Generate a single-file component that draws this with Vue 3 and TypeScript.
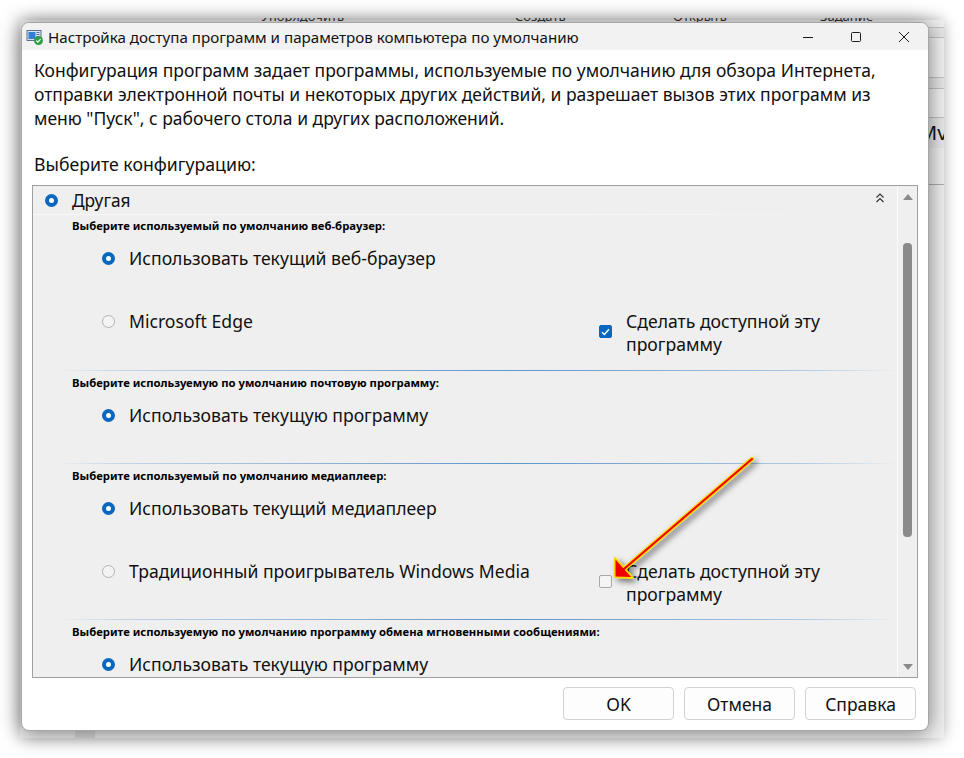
<template>
  <div class="page">
    <div class="behind">
      <div class="behind__tools">
        <span class="behind__tool behind__tool--a">Упорядочить</span>
        <span class="behind__tool behind__tool--b">Создать</span>
        <span class="behind__tool behind__tool--c">Открыть</span>
        <span class="behind__tool behind__tool--d">Задание</span>
      </div>
      <div class="behind__strip">
        <div class="behind__row behind__row--a" />
        <div class="behind__row behind__row--b" />
        <div class="behind__row behind__row--c" />
        <div class="behind__row behind__row--d" />
        <div class="behind__row behind__row--e" />
        <div class="behind__row behind__row--f"><span>Мv</span></div>
        <div class="behind__row behind__row--g" />
      </div>
      <div class="behind__mark" />

      <div class="dialog">
        <header class="dialog__title">
          <svg class="dialog__icon" width="18" height="18" viewBox="0 0 18 18">
            <rect x="0.5" y="2" width="15" height="11" fill="#5a6f8c" />
            <rect x="1.5" y="3" width="13" height="9" fill="#d8e4f2" />
            <rect x="2.5" y="4" width="7" height="7" fill="#2f7fd6" />
            <rect x="10.5" y="4" width="3" height="1" fill="#5a6f8c" />
            <rect x="10.5" y="6" width="3" height="1" fill="#5a6f8c" />
            <rect x="10.5" y="8" width="3" height="1" fill="#5a6f8c" />
            <circle cx="12.5" cy="12.5" r="4.5" fill="#2f9e44" />
            <path d="M10.3 12.6l1.5 1.5 2.8-3" fill="none" stroke="#fff" stroke-width="1.2" />
          </svg>
          <span class="dialog__caption">Настройка доступа программ и параметров компьютера по умолчанию</span>
          <div class="dialog__controls">
            <svg width="12" height="12" viewBox="0 0 12 12"><path d="M1 6.5h10" stroke="#1a1a1a" fill="none" /></svg>
            <svg width="12" height="12" viewBox="0 0 12 12"><rect x="1.5" y="1.5" width="9" height="9" rx="1" stroke="#1a1a1a" fill="none" /></svg>
            <svg width="12" height="12" viewBox="0 0 12 12"><path d="M1 1l10 10M11 1L1 11" stroke="#1a1a1a" fill="none" /></svg>
          </div>
        </header>

        <main class="dialog__body">
          <p class="dialog__intro">
            Конфигурация программ задает программы, используемые по умолчанию для обзора Интернета,<br />
            отправки электронной почты и некоторых других действий, и разрешает вызов этих программ из<br />
            меню "Пуск", с рабочего стола и других расположений.
          </p>
          <p class="dialog__prompt">Выберите конфигурацию:</p>

          <div class="list">
            <div class="list__view">
              <div class="group-head">
                <span class="radio radio--on" />
                <span class="group-head__label">Другая</span>
                <svg class="group-head__chevrons" width="10" height="10" viewBox="0 0 10 10">
                  <path d="M1.5 4.5L5 1l3.5 3.5M1.5 9L5 5.5 8.5 9" fill="none" stroke="#333" stroke-width="1.2" />
                </svg>
              </div>
              <section v-for="(section, i) in sections" :key="section.title" class="section" :class="{ 'section--first': i === 0 }">
                <h3 class="section__title">{{ section.title }}</h3>
                <div class="section__rows">
                  <div v-for="opt in section.options" :key="opt.label" class="row">
                    <span class="radio" :class="{ 'radio--on': opt.selected }" />
                    <span class="row__label">{{ opt.label }}</span>
                    <label v-if="opt.extra" class="row__extra">
                      <span class="check" :class="{ 'check--on': opt.extra === 'on' }">
                        <svg v-if="opt.extra === 'on'" width="9" height="8" viewBox="0 0 9 8">
                          <path d="M1 4.2l2.4 2.3L8 1.3" fill="none" stroke="#fff" stroke-width="1.4" />
                        </svg>
                      </span>
                      <span class="row__extra-text">Сделать доступной эту программу</span>
                    </label>
                  </div>
                </div>
              </section>
            </div>
            <div class="scroll">
              <span class="scroll__up" />
              <span class="scroll__thumb" />
              <span class="scroll__down" />
            </div>
          </div>

          <footer class="dialog__actions">
            <button class="btn">OK</button>
            <button class="btn">Отмена</button>
            <button class="btn">Справка</button>
          </footer>
        </main>
      </div>
    </div>

    <svg class="arrow" width="964" height="758" viewBox="0 0 964 758">
      <defs>
        <filter id="arrow-shadow" x="-20%" y="-20%" width="150%" height="150%">
          <feDropShadow dx="3" dy="3" stdDeviation="3" flood-color="#000" flood-opacity="0.55" />
        </filter>
      </defs>
      <g filter="url(#arrow-shadow)">
        <path d="M752 459L624 569" stroke="#ffd800" stroke-width="4.4" stroke-linecap="round" fill="none" />
        <path d="M615 558L633 578 615 577Z" fill="#ffd800" stroke="#ffd800" stroke-width="2" stroke-linejoin="round" />
      </g>
      <path d="M752 459L624 569" stroke="#ee0000" stroke-width="2" stroke-linecap="round" fill="none" />
      <path d="M615.5 559.5L631 577 615.5 576.5Z" fill="#ee0000" />
    </svg>
  </div>
</template>

<script setup lang="ts">
interface Option {
  label: string;
  selected: boolean;
  extra?: 'on' | 'off';
}

interface Section {
  title: string;
  options: Option[];
}

const sections: Section[] = [
  {
    title: 'Выберите используемый по умолчанию веб-браузер:',
    options: [
      { label: 'Использовать текущий веб-браузер', selected: true },
      { label: 'Microsoft Edge', selected: false, extra: 'on' },
    ],
  },
  {
    title: 'Выберите используемую по умолчанию почтовую программу:',
    options: [{ label: 'Использовать текущую программу', selected: true }],
  },
  {
    title: 'Выберите используемый по умолчанию медиаплеер:',
    options: [
      { label: 'Использовать текущий медиаплеер', selected: true },
      { label: 'Традиционный проигрыватель Windows Media', selected: false, extra: 'off' },
    ],
  },
  {
    title: 'Выберите используемую по умолчанию программу обмена мгновенными сообщениями:',
    options: [{ label: 'Использовать текущую программу', selected: true }],
  },
];
</script>

<style>
html,
body {
  margin: 0;
  background: #fff;
}
</style>

<style scoped>
.page {
  position: relative;
  width: 964px;
  height: 758px;
  padding: 20px;
  box-sizing: border-box;
  overflow: hidden;
  background: #fff;
  font-family: "Noto Sans", "Open Sans", sans-serif;
  color: #111;
}

.behind {
  position: relative;
  width: 924px;
  height: 718px;
  padding: 2px 0 0 1px;
  box-sizing: border-box;
  background: #f1f1f1;
  box-shadow: 0 0 14px rgba(0, 0, 0, 0.26);
}

.behind__tools {
  position: absolute;
  top: -2px;
  left: 0;
  right: 0;
  height: 4px;
  overflow: hidden;
  font-size: 13px;
  line-height: 12px;
}

.behind__tool {
  position: absolute;
  bottom: 0;
  color: #333;
}

.behind__tool--a { left: 241px; }
.behind__tool--b { left: 495px; }
.behind__tool--c { left: 653px; }
.behind__tool--d { left: 800px; }

.behind__strip {
  position: absolute;
  top: 0;
  right: 0;
  width: 16px;
  display: flex;
  flex-direction: column;
  overflow: hidden;
}

.behind__row {
  box-sizing: border-box;
  border-bottom: 1px solid #c4c4c4;
}

.behind__row--a { height: 8px; background: #f1f1f1; }
.behind__row--b { height: 10px; background: #e8e8e8; }
.behind__row--c { height: 40px; background: #f3f3f3; }
.behind__row--d { height: 11px; background: #e8e8e8; }
.behind__row--e { height: 29px; background: #f3f3f3; }
.behind__row--f {
  height: 30px;
  background: #e9e9e9;
  border-bottom: 0;
  font-size: 20px;
  line-height: 30px;
  white-space: nowrap;
}
.behind__row--f span { display: block; margin-left: -9px; color: #111; }
.behind__row--g { height: 37px; background: #f1f1f1; border-bottom-color: #aeaeae; }

.behind__mark {
  position: absolute;
  left: 55px;
  bottom: 0;
  width: 20px;
  height: 7px;
  background: rgba(0, 0, 0, 0.08);
}

.dialog {
  position: relative;
  width: 908px;
  height: 709px;
  display: flex;
  flex-direction: column;
  box-sizing: border-box;
  border: 1px solid #a6a6a6;
  border-radius: 8px;
  background: #fff;
  overflow: hidden;
  box-shadow: 0 2px 22px rgba(0, 0, 0, 0.5);
}

.dialog__title {
  height: 27px;
  flex: none;
  display: flex;
  align-items: center;
  background: #f2f2f2;
  padding-left: 4px;
}

.dialog__icon {
  flex: none;
}

.dialog__caption {
  margin-left: 4px;
  font-size: 15.15px;
  white-space: nowrap;
}

.dialog__controls {
  margin-left: auto;
  display: flex;
  gap: 36px;
  padding-right: 18px;
}

.dialog__body {
  flex: 1;
  display: flex;
  flex-direction: column;
  padding: 8px 10px 0 10px;
}

.dialog__intro {
  margin: 0 0 0 2px;
  font-size: 17.5px;
  line-height: 24px;
  white-space: nowrap;
}

.dialog__prompt {
  margin: 22px 0 0 2px;
  font-size: 17.7px;
  line-height: 24px;
}

.list {
  margin-top: 9px;
  width: 886px;
  height: 493px;
  box-sizing: border-box;
  flex: none;
  display: flex;
  border: 1px solid #a0a0a0;
  background: #efefef;
}

.list__view {
  flex: 1;
  min-width: 0;
  overflow: hidden;
}

.group-head {
  height: 28px;
  display: flex;
  align-items: center;
  box-sizing: border-box;
  padding-left: 12px;
}

.group-head__label {
  margin-left: 14px;
  font-size: 17.3px;
}

.group-head__chevrons {
  margin-left: auto;
  margin-right: 12px;
  margin-top: -4px;
}

.section {
  position: relative;
  padding: 4px 0 13px 39px;
  border-top: 1px solid transparent;
  border-image: linear-gradient(90deg, transparent 3%, #c3d6e8 10%, #5a95ca 55%, #a9c8e4 88%, transparent 100%) 1;
}

.section--first {
  padding-top: 3px;
  padding-bottom: 14px;
  border-image: linear-gradient(90deg, #f8f8f8 60%, transparent 95%) 1;
}

.section__title {
  margin: 0;
  font-size: 11.3px;
  line-height: 16px;
  font-weight: 700;
  color: #000;
  white-space: nowrap;
}

.section__rows {
  margin-top: 13px;
  display: flex;
  flex-direction: column;
  gap: 17px;
}

.row {
  min-height: 46px;
  display: flex;
  align-items: flex-start;
  padding-left: 30px;
  line-height: 23px;
  font-size: 17.6px;
}

.row .radio {
  margin-top: 5px;
}

.row__label {
  margin-left: 14px;
  white-space: nowrap;
}

.row__extra {
  margin-left: auto;
  width: 298px;
  display: flex;
  align-items: flex-start;
  flex: none;
}

.row__extra .check {
  margin-top: 15px;
}

.row__extra-text {
  margin-left: 14px;
  width: 250px;
}

.radio {
  flex: none;
  width: 13px;
  height: 13px;
  box-sizing: border-box;
  border-radius: 50%;
  border: 1px solid #b2b2b2;
  background: #f4f4f4;
}

.radio--on {
  border: 4px solid #0a67c0;
  background: #fff;
}

.check {
  flex: none;
  width: 13px;
  height: 13px;
  box-sizing: border-box;
  border: 1px solid #a8a8a8;
  border-radius: 2px;
  background: #f4f4f4;
  display: flex;
  align-items: center;
  justify-content: center;
}

.check--on {
  border-color: #0a67c0;
  background: #0a67c0;
}

.scroll {
  width: 20px;
  flex: none;
  box-sizing: border-box;
  border-left: 1px solid #fbfbfb;
  display: flex;
  flex-direction: column;
  align-items: center;
  padding-top: 8px;
}

.scroll__up,
.scroll__down {
  width: 0;
  height: 0;
  border-left: 5px solid transparent;
  border-right: 5px solid transparent;
}

.scroll__up {
  border-bottom: 6px solid #8a8a8a;
}

.scroll__down {
  margin-top: 127px;
  border-top: 6px solid #8a8a8a;
}

.scroll__thumb {
  margin-top: 43px;
  width: 9px;
  height: 294px;
  background: #8a8a8a;
  border-radius: 4px;
}

.dialog__actions {
  display: flex;
  justify-content: flex-end;
  gap: 10px;
  margin-top: 9px;
  padding-right: 2px;
}

.btn {
  width: 111px;
  height: 33px;
  box-sizing: border-box;
  border: 1px solid #d2d2d2;
  border-radius: 4px;
  background: #fdfdfd;
  font: inherit;
  font-size: 17.5px;
  color: #111;
  padding: 0;
}

.arrow {
  position: absolute;
  inset: 0;
  pointer-events: none;
}
</style>
